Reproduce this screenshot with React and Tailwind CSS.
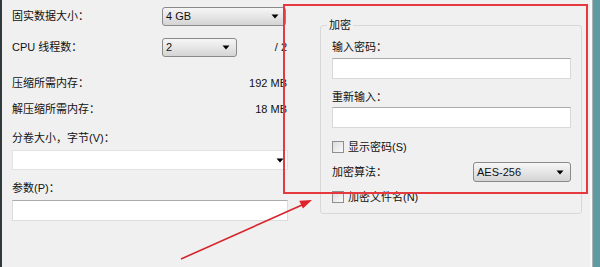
import React from "react";

const font = { fontFamily: '"Liberation Sans", "Noto Sans CJK SC", sans-serif' };

function Arrow() {
  return (
    <svg width="8" height="5" viewBox="0 0 8 5" className="shrink-0">
      <path d="M0.5 0.5 H7.5 L4 4.5 Z" fill="#000" />
    </svg>
  );
}

function Dropdown({ value, className }) {
  return (
    <div
      className={
        "flex items-center justify-between rounded-[3px] border border-[#8a8a8a] bg-gradient-to-b from-[#f6f6f6] via-[#e6e6e6] to-[#d4d4d4] pl-[3px] pr-[6px] text-[11px] text-[#111] " +
        className
      }
    >
      <span className="leading-none">{value}</span>
      <Arrow />
    </div>
  );
}

function Checkbox({ label }) {
  return (
    <div className="flex h-[14px] items-center gap-[4px]">
      <div className="h-[12px] w-[12px] border border-[#8e8f8f] bg-gradient-to-br from-[#dcdcdc] to-[#fafafa]" />
      <span className="text-[11px] leading-none text-[#111]">{label}</span>
    </div>
  );
}

export default function App() {
  return (
    <div
      className="relative flex h-[267px] w-[600px] overflow-hidden bg-[#f0f0f0] text-[#111]"
      style={font}
    >
      {/* left window edge */}
      <div className="w-[2px] shrink-0 bg-[#2f3b3d]" />

      {/* left column */}
      <div className="flex w-[286px] shrink-0 flex-col pl-[10px] text-[11px]">
        <div className="mt-[7px] flex h-[19px] items-center">
          <span className="w-[150px]">固实数据大小：</span>
          <Dropdown value="4 GB" className="h-[19px] w-[124px]" />
        </div>
        <div className="mt-[12px] flex h-[19px] items-center">
          <span className="w-[150px]">CPU 线程数：</span>
          <Dropdown value="2" className="h-[19px] w-[75px]" />
          <span className="ml-auto pr-[1px]">/ 2</span>
        </div>
        <div className="mt-[17px] flex h-[18px] items-center justify-between">
          <span>压缩所需内存：</span>
          <span className="pr-[1px]">192 MB</span>
        </div>
        <div className="mt-[8px] flex h-[18px] items-center justify-between">
          <span>解压缩所需内存：</span>
          <span className="pr-[1px]">18 MB</span>
        </div>
        <div className="mt-[11px] flex h-[18px] items-center">
          <span>分卷大小，字节(V)：</span>
        </div>
        <div className="mt-[3px] flex h-[20px] items-center justify-end border border-[#e2e2e2] bg-white pr-[3px]">
          <Arrow />
        </div>
        <div className="mt-[9px] flex h-[18px] items-center">
          <span>参数(P)：</span>
        </div>
        <div className="mt-[3px] h-[21px] border border-[#dcdcdc] border-t-[#ababab] bg-white" />
      </div>

      {/* right column */}
      <div className="ml-[32px] flex w-[262px] shrink-0 flex-col">
        <div className="relative mt-[25px] h-[189px] rounded-[3px] border border-[#d8d8d8] px-[11px] text-[11px]">
          <span className="absolute left-[6px] top-[-7px] bg-[#f0f0f0] px-[2px] leading-[12px]">加密</span>
          <div className="mt-[14px] flex h-[14px] items-center">输入密码：</div>
          <div className="mt-[4px] h-[21px] w-[239px] border border-[#d8d8d8] border-t-[#ababab] bg-white" />
          <div className="mt-[11px] flex h-[14px] items-center">重新输入：</div>
          <div className="mt-[3px] h-[21px] w-[239px] border border-[#d8d8d8] border-t-[#ababab] bg-white" />
          <div className="mt-[12px]">
            <Checkbox label="显示密码(S)" />
          </div>
          <div className="mt-[8px] flex h-[20px] w-[239px] items-center justify-between">
            <span>加密算法：</span>
            <Dropdown value="AES-256" className="h-[20px] w-[98px]" />
          </div>
          <div className="mt-[8px]">
            <Checkbox label="加密文件名(N)" />
          </div>
        </div>
      </div>

      {/* right window edge */}
      <div className="ml-auto flex shrink-0">
        <div className="w-[2px] bg-[#fafafa]" />
        <div className="w-[1px] bg-[#a9b4b6]" />
        <div className="w-[7px] bg-[#5e9aa0]" />
      </div>

      {/* annotation overlay */}
      <div className="pointer-events-none absolute left-[283px] top-[4px] h-[190px] w-[305px] border-2 border-[#e5393f]" />
      <svg
        className="pointer-events-none absolute left-0 top-0"
        width="600"
        height="267"
        viewBox="0 0 600 267"
      >
        <line x1="181" y1="259" x2="302" y2="205" stroke="#d8232a" strokeWidth="1.6" />
        <polygon points="312,200 302.9,208.6 299.3,200.8" fill="#e0222a" />
      </svg>
    </div>
  );
}
